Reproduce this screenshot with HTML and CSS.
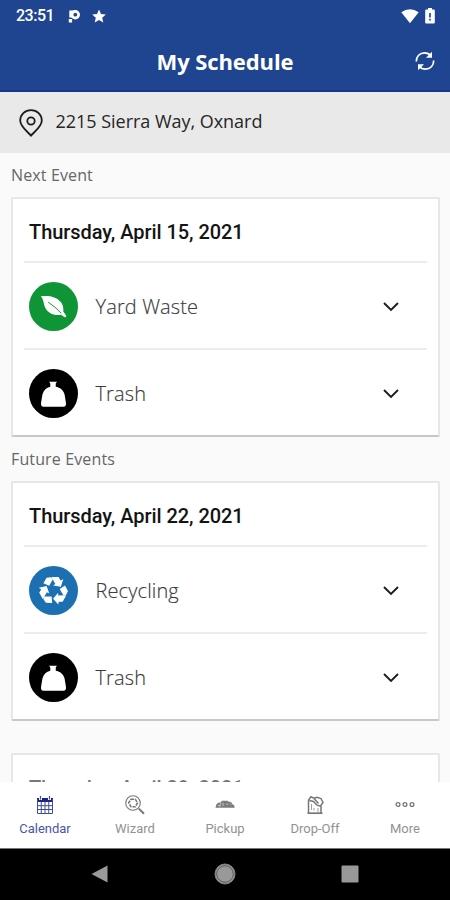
FILE: index.html
```html
<!DOCTYPE html>
<html lang="en">
<head>
<meta charset="utf-8">
<title>My Schedule</title>
<link rel="stylesheet" href="styles.css">
</head>
<body>
<svg class="defs" width="0" height="0" aria-hidden="true">
  <symbol id="chevron" viewBox="0 0 18 12"><path d="M2 2l7 7 7-7" fill="none" stroke="#1c1c1c" stroke-width="1.9"/></symbol>
  <symbol id="trash" viewBox="0 0 50 50"><path d="M20.500 13h8l-1.200 1.800v3.400c4.500.8 7.700 3.300 9 7.800l1.400 8.500c.3 2.800-.5 4-2.500 4H14.800c-2 0-2.800-1.200-2.500-4L13.700 26c1.300-4.500 4-7 8-7.800v-3.400z" fill="#fff"/></symbol>
</svg>
<div class="phone">
  <header class="top">
    <div class="status">
      <span class="clock">23:51</span>
      <svg class="parking" width="13" height="15" viewBox="0 0 13 15"><circle cx="7.300" cy="5.700" r="3.300" fill="none" stroke="#fff" stroke-width="2.800"/><path d="M1.300 1.500h5v2.800H4.100v4.200H1.300zM.8 10h3.300v3.500H.8z" fill="#fff"/></svg>
      <svg class="star" width="14" height="14" viewBox="0 0 14 14"><path d="M7 .4l2 4.500 4.800.5-3.600 3.300 1.100 4.900L7 11.100l-4.300 2.500 1.100-4.900L.2 5.400 5 4.900z" fill="#fff"/></svg>
      <svg class="wifi" width="18" height="15" viewBox="0 0 18 15"><path d="M.3 3.300Q9-2.800 17.700 3.300L9 14.300z" fill="#fff"/></svg>
      <svg class="battery" width="10" height="16" viewBox="0 0 10 16"><path d="M3 0h4v1.600h1.800q1 0 1 1v12q0 1-1 1H1.200q-1 0-1-1v-12q0-1 1-1H3z" fill="#fff"/><path d="M5 5v4.600M5 10.700v1.700" stroke="#1f4591" stroke-width="1.700"/></svg>
    </div>
    <div class="titlebar">
      <h1>My Schedule</h1>
      <svg class="refresh" width="20" height="20" viewBox="0 0 20 20"><g fill="none" stroke="#fff" stroke-width="1.700"><path d="M1.300 10.500C1.200 5.300 4.800 1.900 9.500 1.900c2.700 0 4.800 1 6.300 2.900M18.700 9.500c.1 5.200-3.500 8.600-8.200 8.600-2.700 0-4.800-1-6.300-2.900"/></g><path d="M17 .8v6h-6zM3 19.200v-6h6z" fill="#fff"/></svg>
    </div>
  </header>
  <div class="address">
    <svg width="24" height="28" viewBox="0 0 24 28"><path d="M12 26.600C8.500 22.500 1.200 17.800 1.200 11.500 1.200 5.400 6 1.200 12 1.200s10.800 4.200 10.800 10.300c0 6.300-7.300 11-10.800 15.100z" fill="none" stroke="#1d1d1d" stroke-width="1.800"/><circle cx="12" cy="12" r="3.700" fill="none" stroke="#1d1d1d" stroke-width="1.800"/></svg>
    <span>2215 Sierra Way, Oxnard</span>
  </div>
  <main class="list">
    <h2>Next Event</h2>
    <section class="card">
      <h3>Thursday, April 15, 2021</h3>
      <div class="row">
        <svg class="badge green" viewBox="0 0 50 50"><path d="M12 14.500c8-1 16 .2 20.500 6 2.600 3.400 2.700 7 2.500 9.500l3.200 4.600-1.200 1.500-4.500-2.800c-6.500 1.400-13.300-1.300-16-7.300-1.900-4.300-1.300-8.200-4.500-11.500z" fill="#fff"/><path d="M19.500 20.500q7.500 5 13.500 11.500" fill="none" stroke="#0f9536" stroke-width="1"/></svg>
        <span>Yard Waste</span><svg class="chev"><use href="#chevron"/></svg>
      </div>
      <div class="row">
        <svg class="badge black"><use href="#trash"/></svg>
        <span>Trash</span><svg class="chev"><use href="#chevron"/></svg>
      </div>
    </section>
    <h2>Future Events</h2>
    <section class="card">
      <h3>Thursday, April 22, 2021</h3>
      <div class="row">
        <svg class="badge blue" viewBox="-25 -25 50 50"><defs><g id="arm"><path d="M-10.300-7.500l3.300-5.500 4.600-.4 1.800 2-3.800 6.600z"/><path d="M-2-13.800H5.200L7.200-10.300l2.800-1.200L7.500-3.800l-7.900-1.400 2.300-1.500-3.200-5.500z"/></g></defs><g fill="#fff"><use href="#arm"/><use href="#arm" transform="rotate(120)"/><use href="#arm" transform="rotate(240)"/></g></svg>
        <span>Recycling</span><svg class="chev"><use href="#chevron"/></svg>
      </div>
      <div class="row">
        <svg class="badge black"><use href="#trash"/></svg>
        <span>Trash</span><svg class="chev"><use href="#chevron"/></svg>
      </div>
    </section>
    <section class="card later">
      <h3>Thursday, April 29, 2021</h3>
    </section>
  </main>
  <nav class="tabs">
    <a class="active"><svg width="20" height="20" viewBox="0 0 20 20"><path d="M2 3h16v4H2z" fill="#1d2583"/><path d="M2.500 4v14.500h15V4M6.250 7v11.500M10 7v11.500M13.750 7v11.500M2.500 10.700h15M2.500 14.500h15" fill="none" stroke="#424b98" stroke-width="1"/><path d="M5.500 1v4M14.500 1v4" stroke="#fff" stroke-width="3"/><path d="M5.500 1v3.500M14.500 1v3.500" stroke="#424b98" stroke-width="1.200"/></svg><span>Calendar</span></a>
    <a><svg width="20" height="20" viewBox="0 0 20 20"><g fill="none" stroke="#777"><circle cx="8" cy="8" r="7.300" stroke-width="1.100"/><path d="M6 4.200h4.300l2.200 3.600-2.200 3.900H6L3.700 7.800z" stroke-width="1.600" stroke-dasharray="3.200 1"/><path d="M13.800 13.600l5.200 5.200" stroke-width="2"/></g></svg><span>Wizard</span></a>
    <a><svg width="20" height="20" viewBox="0 0 20 20"><path d="M.5 12.700l.8-3.300 2.200-1.800 1.700.2L7 5.700h5.500l1.200 1 2.300.2 1.500 2.300 1.800 1.300.4 2.200z" fill="#7b7b7b"/><path d="M5.800 8l-1 4M8 7.500v3.500M11 9.200h2.200M15 8.500l1.300 1.300M3 10.500h2" stroke="#ddd" stroke-width=".7"/></svg><span>Pickup</span></a>
    <a><svg width="20" height="20" viewBox="0 0 20 20"><g fill="none" stroke="#777" stroke-width="1.500"><path d="M3.500 5v13M3.500 5L6 1.800l3 1.400 3-1 4 1.300 2 4-2.600 3.700-3.400-1L8.500 6.500 4.500 5.500M9 3.500l4.500 5M16 11v7"/><path d="M2.500 18.200h15" stroke-width="1.700"/><path d="M6.500 9v6M9 13v2.500M13 13v4" stroke-width=".7"/></g></svg><span>Drop-Off</span></a>
    <a><svg width="20" height="20" viewBox="0 0 20 20"><g fill="none" stroke="#777" stroke-width="1.300"><circle cx="3" cy="9.500" r="1.900"/><circle cx="10" cy="9.500" r="1.900"/><circle cx="17" cy="9.500" r="1.900"/></g></svg><span>More</span></a>
  </nav>
  <footer class="system">
    <svg width="18" height="18" viewBox="0 0 18 18"><path d="M.5 9L16.500.5v17z" fill="#999"/></svg>
    <svg width="22" height="22" viewBox="0 0 22 22"><circle cx="11" cy="11" r="10" fill="#999" stroke="#858585"/><circle cx="11" cy="11" r="8.300" fill="none" stroke="#555" stroke-width=".9"/></svg>
    <svg width="18" height="18" viewBox="0 0 18 18"><rect x=".5" y=".5" width="17" height="17" rx="1" fill="#999"/></svg>
  </footer>
</div>
</body>
</html>
```
FILE: styles.css
```css
* { box-sizing: border-box; }
body { margin: 0; font-family: "Open Sans", sans-serif; background: #fafafa; }
h1, h2, h3 { margin: 0; }
svg { display: block; flex: none; }
.defs { position: absolute; }
.phone { width: 450px; height: 900px; display: flex; flex-direction: column; overflow: hidden; }
.top { height: 92px; flex: none; background: #1f4591; border-bottom: 2px solid #173888; color: #fff; }
.status { height: 32px; display: flex; align-items: center; padding: 0 15px 0 16px; }
.clock { font: 500 16px/34px Roboto, sans-serif; width: 52px; letter-spacing: -.5px; }
.star { margin-left: 11px; }
.wifi { margin-left: auto; margin-right: 6px; }
.titlebar { height: 58px; display: grid; grid-template-columns: 1fr auto 1fr; align-items: center; }
.titlebar h1 { grid-column: 2; font-size: 22px; font-weight: 700; line-height: 58px; letter-spacing: -.1px; }
.refresh { justify-self: end; margin-right: 15px; }
.address { height: 61px; flex: none; display: flex; align-items: center; gap: 12.500px; padding: 0 19px; background: #e9e9e9; color: #262626; font-size: 18px; letter-spacing: -.03px; }
.address span { line-height: 24px; margin-top: -4px; }
.list { height: 629px; flex: none; overflow: hidden; padding: 0 10px 0 11px; }
.list h2 { height: 44px; font-size: 16px; font-weight: 400; line-height: 45px; color: #666; letter-spacing: .13px; }
.card { height: 240px; background: #fff; border: 2px solid #e7e7e7; border-bottom-color: #c8c8c8; border-radius: 2px; padding: 0 11px; }
.card h3 { height: 62px; padding: 0 5px; font: 500 20px/67px Roboto, sans-serif; letter-spacing: -.05px; color: #141414; }
.row { height: 87px; border-top: 2px solid #ececec; display: flex; align-items: center; padding: 2px 27px 0 5px; color: #383838; font-size: 20px; font-weight: 300; }
.row span { margin-left: 17.500px; flex: 1; letter-spacing: .12px; -webkit-text-stroke: .15px #444; }
.badge { width: 49px; height: 49px; border-radius: 50%; }
.green { background: #0f9536; }
.black { background: #000; }
.blue { background: #1c70b2; }
.badge use { width: 49px; height: 49px; }
.chev { width: 18px; height: 12px; }
.later { margin-top: 32px; }
.card.later h3 { color: #777; }
.tabs { height: 66px; flex: none; display: grid; grid-template-columns: repeat(5, 1fr); background: #fff; }
.tabs a { display: flex; flex-direction: column; align-items: center; padding-top: 13px; color: #929292; font: 400 13px/16px Roboto, sans-serif; }
.tabs span { margin-top: 6px; }
.tabs .active { color: #4b55a5; }
.system { height: 52px; flex: none; background: #000; border-top: 1px solid #777; display: flex; justify-content: space-between; align-items: center; padding: 0 91px 2px 91px; }
```
